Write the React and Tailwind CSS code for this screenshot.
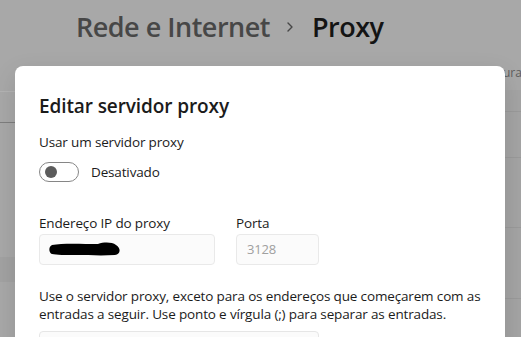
import React from "react";

const font = { fontFamily: '"Open Sans", "Noto Sans", sans-serif' };

const Dialog = () => {
  return (
    <div className="absolute left-[15px] top-[66px] w-[490px] h-[300px] bg-white rounded-[8px] shadow-[0_8px_24px_rgba(0,0,0,0.12)] pl-[24px] pt-[28px] text-[#1b1b1b] text-[13.5px] tracking-[-0.15px]">
      <h2 className="text-[19px] leading-[24px] font-semibold tracking-[-0.1px]">Editar servidor proxy</h2>

      <p className="mt-[14px] leading-[20px]">Usar um servidor proxy</p>

      <div className="mt-[10px] flex items-center">
        <div className="w-[40px] h-[20px] rounded-full border border-[#868686] flex items-center pl-[5px]">
          <div className="w-[12px] h-[12px] rounded-full bg-[#5c5c5c]" />
        </div>
        <span className="ml-[12px] leading-[20px]">Desativado</span>
      </div>

      <div className="mt-[31px] flex gap-[21px]">
        <div className="flex flex-col">
          <label className="leading-[20px]">Endereço IP do proxy</label>
          <div className="mt-[1px] w-[176px] h-[31px] rounded-[4px] border border-[#e9e9e9] bg-[#fbfbfb] flex items-center pl-[8px]">
            {/* redacted value */}
            <svg width="74" height="15" viewBox="0 0 74 15">
              <path d="M4 3 C14 1 34 2 50 2 C56 0 64 0 68 3 C73 6 73 12 67 13 C52 14 40 13 28 13 C18 13 8 13 4 12 C1 11 0 5 4 3 Z" fill="#000" />
            </svg>
          </div>
        </div>
        <div className="flex flex-col">
          <label className="leading-[20px]">Porta</label>
          <div className="mt-[1px] w-[83px] h-[31px] rounded-[4px] border border-[#e9e9e9] bg-[#fbfbfb] flex items-center pl-[10px] text-[13px] text-[#a0a0a0]">
            3128
          </div>
        </div>
      </div>

      <p className="mt-[22px] leading-[18px] whitespace-nowrap">
        Use o servidor proxy, exceto para os endereços que começarem com as
        <br />
        entradas a seguir. Use ponto e vírgula (;) para separar as entradas.
      </p>

      <div className="mt-[8px] w-[280px] h-[31px] rounded-[4px] border border-[#e6e6e6] bg-[#fbfbfb]" />
    </div>
  );
};

export default function App() {
  return (
    <div className="relative w-[521px] h-[337px] overflow-hidden bg-[#a8a8a8]" style={font}>
      {/* page header */}
      <div className="h-[50px] pl-[76px] pt-[3px] flex items-center text-[27px] font-semibold leading-[36px] tracking-[-0.5px]">
        <span className="text-[#474747]">Rede e Internet</span>
        <svg className="ml-[15px] mr-[17px]" width="10" height="12" viewBox="0 0 10 12">
          <path d="M3 2 L7 6 L3 10" fill="none" stroke="#474747" strokeWidth="1.4" strokeLinecap="round" strokeLinejoin="round" />
        </svg>
        <span className="text-[#141414]">Proxy</span>
      </div>

      {/* background content behind the dialog */}
      <div className="flex">
        <div className="w-[15px] flex flex-col">
          <div className="h-[42px] border-b border-[#b3b3b3]" />
          <div className="h-[31px] border-b border-[#7e7e7e]" />
          <div className="h-[134px]" />
          <div className="h-[25px] bg-[#a2a2a2]" />
        </div>
        <div className="flex-1" />
        <div className="w-[16px] flex flex-col">
          <div className="h-[40px] pt-[16px] text-[12px] leading-[14px] text-[#5e5e5e] -ml-[2px]">ura</div>
          <div className="h-[22px] bg-[#a4a4a4] border-b border-[#9a9a9a]" />
          <div className="h-[46px] bg-[#a4a4a4] border-b border-[#9a9a9a]" />
          <div className="h-[70px] bg-[#a4a4a4] border-b border-[#9a9a9a]" />
          <div className="h-[71px] bg-[#a4a4a4] border-b border-[#9a9a9a]" />
          <div className="h-[40px] bg-[#a4a4a4]" />
        </div>
      </div>

      <Dialog />
    </div>
  );
}
